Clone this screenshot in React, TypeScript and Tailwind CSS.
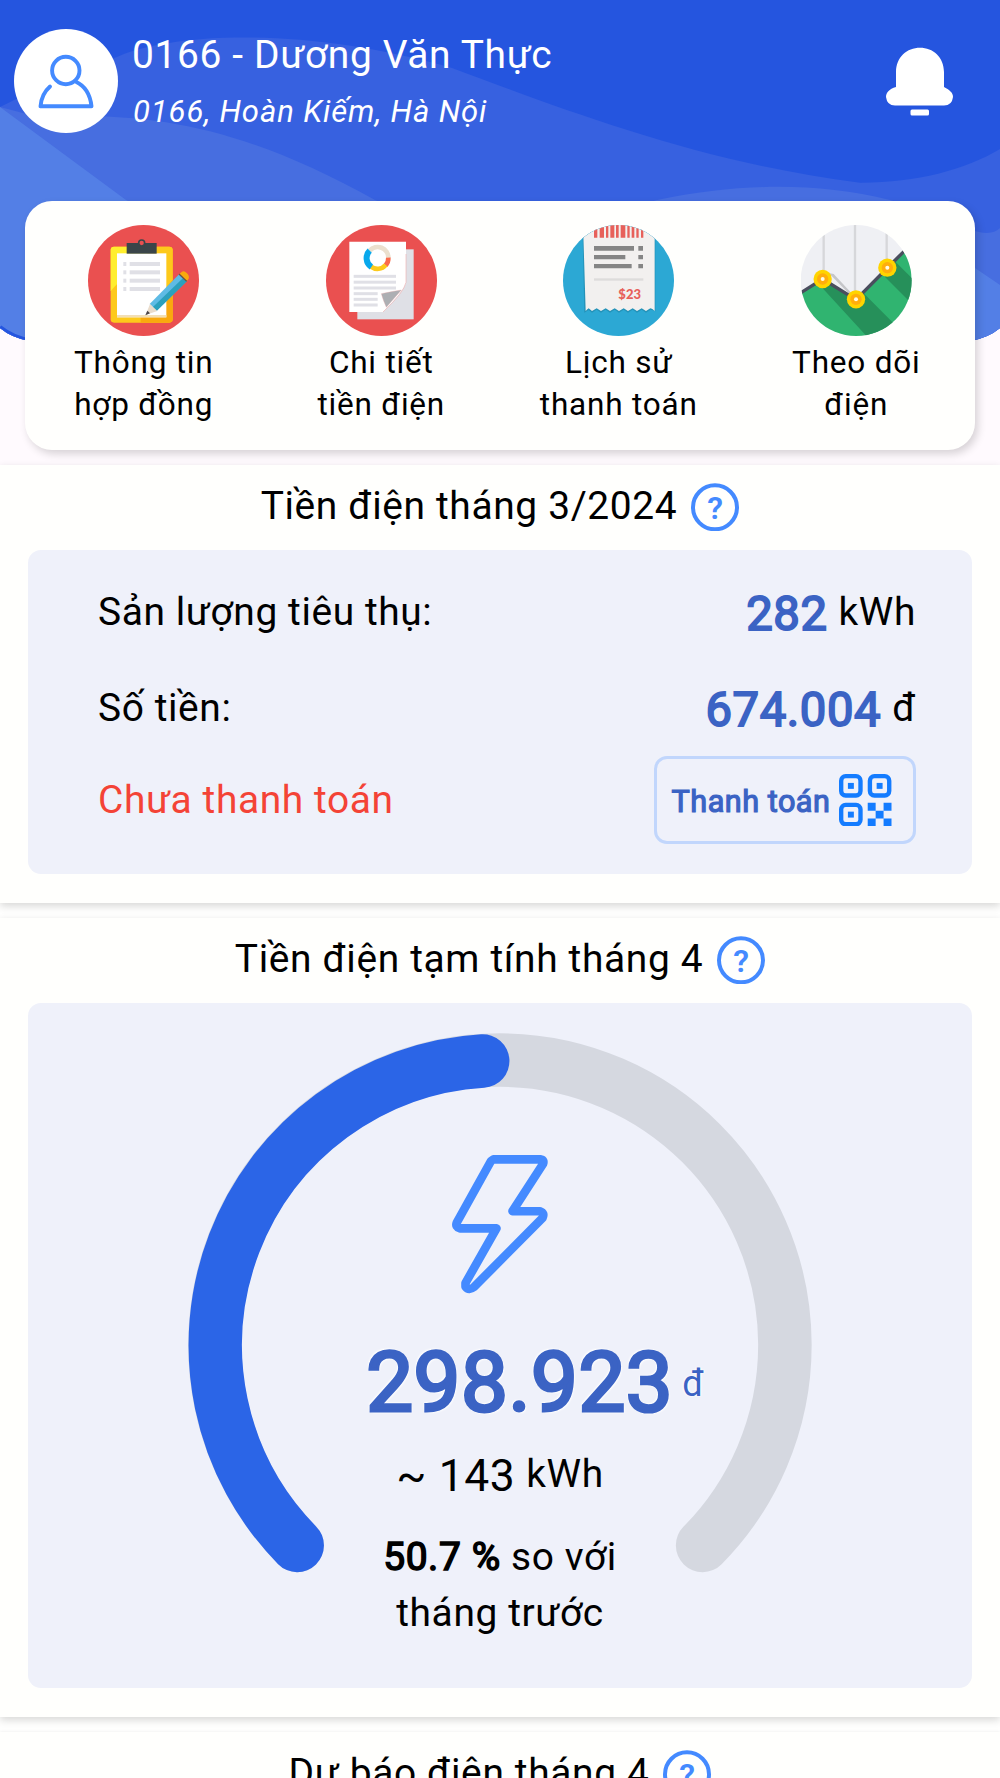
import React from 'react';

// 标题旁的问号
function HelpIcon() {
  return (
    <svg className="h-12 w-12 shrink-0" viewBox="0 0 48 48">
      <circle cx="24" cy="24.3" r="22" fill="none" stroke="#448aff" strokeWidth="4" />
      <text x="24" y="35.5" textAnchor="middle" fontFamily="Roboto, sans-serif" fontWeight="600" fontSize="32" fill="#448aff">?</text>
    </svg>
  );
}

function ContractIcon() {
  return (
    <svg className="h-[111px] w-[111px]" viewBox="84 43 333 333">
      <circle cx="250.500" cy="209.500" r="166.500" fill="#ea5050" />
      <rect x="152" y="108" width="186" height="228" rx="10" fill="#fdc91b" />
      <path d="M152 242V118q0-10 10-10h100v60q-70 20-110 74z" fill="#ffee2e" />
      <path d="M242 336v-18l96-110v118q0 10-10 10z" fill="#f9a90e" />
      <path d="M290 108h38q10 0 10 10v90h-48z" fill="#fdc91b" />
      <rect x="171" y="128" width="148" height="192" fill="#fff" />
      <rect x="171" y="313" width="148" height="7" fill="#f3dfb5" />
      <rect x="200" y="97" width="90" height="32" fill="#3a4549" />
      <circle cx="245" cy="97" r="9" fill="#ea5050" stroke="#3a4549" strokeWidth="5" />
      {[160, 185, 210, 235].map((y) => (
        <g key={y} fill="#e0e0e6">
          <rect x="190" y={y - 6} width="9" height="12" />
          <rect x="209" y={y - 6} width="91" height="12" />
        </g>
      ))}
      <path d="M358 190l22 21-91 90-20-21z" fill="#5ebbe5" />
      <path d="M370 201l11 11-91 89-12-11z" fill="#2ba0bd" />
      <path d="M270 280l-13 33 35-12z" fill="#eadccb" />
      <path d="M262 300l-6 14 14-6z" fill="#4a4347" />
      <path d="M357 191l8-7q7-5 15 3 9 8 6 17l-6 8z" fill="#f9a90e" />
      <path d="M357 190l23 22" stroke="#6b5047" strokeWidth="4" />
    </svg>
  );
}

function BillIcon() {
  return (
    <svg className="h-[111px] w-[111px]" viewBox="77 43 333 333">
      <circle cx="243.500" cy="209.500" r="166.500" fill="#ea5050" />
      <rect x="171" y="116" width="169" height="210" fill="#dfe0e6" />
      <path d="M147 93h170v122q-4 24-69 89H147z" fill="#fff" />
      <path d="M317 130v85q-6 30-69 89" fill="none" stroke="#efb4b4" strokeWidth="2" />
      <path d="M243 249q35-7 60-11l-45 52q-9-20-15-41z" fill="#adafb3" stroke="#e9a5a5" strokeWidth="1" />
      <g fill="none" strokeWidth="14">
        <path d="M208 120A32 32 0 0 1 264 142" stroke="#ebe0ce" />
        <path d="M264 141A32 32 0 0 1 256 164" stroke="#fb6a4c" />
        <path d="M256 163A32 32 0 0 1 212 168" stroke="#fcca1c" />
        <path d="M213 169A32 32 0 0 1 208 120" stroke="#08a8ec" strokeWidth="18" />
      </g>
      {[197, 214.500, 232].map((y) => (
        <rect key={y} x="160" y={y - 4.500} width="127" height="9" fill="#e0e0e6" />
      ))}
      {[249, 266, 283].map((y) => (
        <rect key={y} x="160" y={y - 4.500} width="72" height="9" fill="#e0e0e6" />
      ))}
    </svg>
  );
}

function HistoryIcon() {
  return (
    <svg className="h-[111px] w-[111px]" viewBox="99 43 333 333">
      <defs>
        <clipPath id="historyClip">
          <circle cx="265.500" cy="209.500" r="166.500" />
        </clipPath>
      </defs>
      <g clipPath="url(#historyClip)">
        <rect x="99" y="43" width="333" height="333" fill="#2ca8d4" />
        <path d="M157 40h219v262q-7-5-15-5l-13 9-13-9-14 9-13-9-14 9-13-9-14 9-13-9-14 9-13-9-14 9-13-9-14 9-10-8q-5 4-13 8z" fill="#2492b8" />
        <path d="M159 40h215v261q-7-8-13-8l-13 8-13-8-14 8-13-8-14 8-13-8-14 8-13-8-14 8-13-8-14 8-13-8-14 8-10-8q-5 4-9 8z" fill="#f2f0ef" />
        <path d="M192 43h10v38h-10zM209 43h13v38h-13zM228 43h7v38h-7zM241 43h12v38h-12zM258 43h8v38h-8zM272 43h14v38h-14zM292 43h7v38h-7zM305 43h8v38h-8zM319 43h7v38h-7zM333 43h7v38h-7z" fill="#e7605a" />
        <path d="M192 106h120v14H192zM325 106h14v14h-14zM192 133h94v13h-94zM325 133h14v13h-14zM192 160h113v13H192zM325 160h14v13h-14z" fill="#858585" />
        <rect x="192" y="203" width="148" height="7" fill="#dddcdb" />
        <text x="265" y="266" fontFamily="Lato, sans-serif" fontWeight="900" fontSize="39" textLength="68" fill="#e7605a">$23</text>
      </g>
    </svg>
  );
}

function TrackIcon() {
  return (
    <svg className="h-[111px] w-[111px]" viewBox="93 43 333 333">
      <defs>
        <clipPath id="trackClip">
          <circle cx="258.500" cy="209.500" r="166.500" />
        </clipPath>
      </defs>
      <g clipPath="url(#trackClip)">
        <rect x="92" y="43" width="333" height="333" fill="#eff0f4" />
        <path d="M161 43v150M255 43v210M350 43v120" stroke="#d6d7da" strokeWidth="7" />
        <path d="M176 187l15 3 58 62-14-5z" fill="#c5c6c9" />
        <path d="M92 247l66-42 100 62 94-95 73-72v276H92z" fill="#30b470" />
        <path d="M158 205l100 62 20-22 100 100-75 46-165-180z" fill="#26905a" />
        <path d="M352 172l25-18 60 60v77l-92-92z" fill="#26905a" />
        <path d="M88 249l70-44 100 62 94-95 50-50" fill="none" stroke="#4a4e5e" strokeWidth="10" />
        {[[158, 205], [258, 266], [352, 171]].map(([x, y]) => (
          <g key={x}>
            <circle cx={x} cy={y} r="27.500" fill="#ffd400" />
            <circle cx={x} cy={y} r="17" fill="#ffae0c" />
            <circle cx={x} cy={y} r="6" fill="#fffbe8" />
          </g>
        ))}
      </g>
    </svg>
  );
}

function QrIcon() {
  return (
    <svg className="h-[52.5px] w-[52.5px]" viewBox="0 0 53 53" fill="#147cff">
      {[[0, 0], [29, 0], [0, 29]].map(([x, y]) => (
        <g key={`${x}-${y}`}>
          <rect x={x + 2.200} y={y + 2.200} width="19.500" height="19.500" rx="4.500" fill="none" stroke="#147cff" strokeWidth="4.400" />
          <rect x={x + 9} y={y + 9} width="6" height="6" />
        </g>
      ))}
      <path d="M29 29h8v8h-8zM45 29h8v8h-8zM37 37h8v8h-8zM29 45h8v8h-8zM45 45h8v8h-8z" />
    </svg>
  );
}

const menus = [
  { icon: <ContractIcon />, lines: ['Thông tin', 'hợp đồng'] },
  { icon: <BillIcon />, lines: ['Chi tiết', 'tiền điện'] },
  { icon: <HistoryIcon />, lines: ['Lịch sử', 'thanh toán'] },
  { icon: <TrackIcon />, lines: ['Theo dõi', 'điện'] },
];

function SectionTitle({ text }: { text: string }) {
  return (
    <div className="flex h-[84px] items-center justify-center gap-[14px]">
      <h2 className="-mt-[2px] text-[38.9px] leading-[46px] tracking-[0.65px]">{text}</h2>
      <HelpIcon />
    </div>
  );
}

function App() {
  return (
    <div className="h-[1778px] w-[1000px] overflow-hidden bg-[#fffffe] font-['Roboto',sans-serif] text-black">
      <div className="relative h-[465px] bg-[#fffafe]">
        <svg className="absolute top-0 left-0 h-[342px] w-[1000px]" viewBox="0 0 1000 342">
          <defs>
            <clipPath id="headerClip">
              <path d="M0 0H1000V328Q988 338 970 341H30Q12 338 0 328z" />
            </clipPath>
          </defs>
          <g clipPath="url(#headerClip)">
            <rect width="1000" height="342" fill="#2555df" />
            <path d="M0 107C50 82 90 68 124 54C190 30 320 30 452 68C560 108 700 163 860 182.700C915 183 965 170 1000 149V342H0z" fill="#3761e0" />
            <path d="M0 107L38 117C150 112 240 125 375 200C450 235 560 230 657 200C740 183 815 182 890 200C930 212 950 226 975 231Q992 236 1000 228V342H0z" fill="#476ee0" />
            <path d="M0 107Q65 155 126 200L340 310H800L975 268L1000 285V342H0z" fill="#537fe6" />
            <path d="M0 327Q14 338 30 340" fill="none" stroke="#2555df" strokeWidth="4" />
          </g>
        </svg>

        <header className="relative flex h-[201px] items-start pl-[13.5px]">
          <div className="mt-[28.5px] flex h-[104.5px] w-[104.5px] items-center justify-center rounded-full bg-white">
            <svg className="h-14 w-14" viewBox="0 0 56 56" fill="none" stroke="#448aff" strokeWidth="3.9" strokeLinecap="round" strokeLinejoin="round">
              <circle cx="27.800" cy="17.500" r="13.700" />
              <path d="M12 33.500Q3.500 41 2.500 53.300H53.500Q51.500 35 38 28.700" />
            </svg>
          </div>
          <div className="ml-[14px] pt-[32px] text-white">
            <h1 className="text-[38.9px] leading-[46px] tracking-[0.65px]">0166 - Dương Văn Thực</h1>
            <p className="mt-[16px] ml-px text-[31px] leading-[36px] tracking-[0.9px] italic">0166, Hoàn Kiếm, Hà Nội</p>
          </div>
          <svg className="mt-[46.5px] mr-[47px] ml-auto h-[70px] w-[67px]" viewBox="0 0 67 70" fill="#fff">
            <path d="M10 40V25C10 10 21 .7 34 .7S58 10 58 25V40C64 43 67 46 67 50Q66 58.500 58 58.500H9Q1 58.500 0 50C0 46 3 42 10 40z" />
            <rect x="24.500" y="62.500" width="18.500" height="6" rx="1.500" />
          </svg>
        </header>

        <div className="relative mx-[25px] grid h-[249px] grid-cols-4 rounded-[27px] bg-[#fffffd] pt-[24px] shadow-[3px_4px_9px_rgba(0,0,0,0.16)]">
          {menus.map((menu) => (
            <div key={menu.lines[0]} className="flex flex-col items-center">
              {menu.icon}
              <div className="mt-[6px] text-center text-[31.5px] leading-[42px] tracking-[0.8px]">
                {menu.lines.map((line) => (
                  <div key={line}>{line}</div>
                ))}
              </div>
            </div>
          ))}
        </div>
      </div>

      <section className="relative h-[438px] bg-[#fffffd] px-[28px] pb-px shadow-[0_3px_8px_rgba(0,0,0,0.16)]">
        <SectionTitle text="Tiền điện tháng 3/2024" />
        <div className="mt-px h-[324px] rounded-[13px] bg-[#eff1fa] pt-[35px] pr-[56px] pl-[70px] text-[38.9px] leading-[54px] tracking-[0.6px]">
          <div className="flex h-[96px] items-start justify-between">
            <span>Sản lượng tiêu thụ:</span>
            <div className="flex items-start gap-[11px]">
              <span className="pt-[2px] text-[47.2px] text-[#3b63c4] [-webkit-text-stroke:1.8px_#3b63c4]">282</span>
              <span>kWh</span>
            </div>
          </div>
          <div className="flex h-[75px] items-start justify-between">
            <span>Số tiền:</span>
            <div className="flex items-start gap-[11px]">
              <span className="pt-[2px] text-[47.2px] text-[#3b63c4] [-webkit-text-stroke:1.8px_#3b63c4]">674.004</span>
              <span>đ</span>
            </div>
          </div>
          <div className="flex h-[88px] items-center justify-between">
            <span className="text-[#f44336]">Chưa thanh toán</span>
            <button className="flex h-[88px] w-[262px] items-center gap-[8px] rounded-[13px] border-3 border-[#c1d6fc] pl-[14px]">
              <span className="w-[160px] pt-[3px] text-[30.6px] tracking-[0.5px] whitespace-nowrap text-[#3b63c4] [-webkit-text-stroke:1.2px_#3b63c4]">Thanh toán</span>
              <QrIcon />
            </button>
          </div>
        </div>
      </section>

      <section className="relative mt-[15px] h-[799px] bg-[#fffffd] px-[28px] shadow-[0_3px_8px_rgba(0,0,0,0.16)]">
        <SectionTitle text="Tiền điện tạm tính tháng 4" />
        <div className="relative mt-px h-[685px] rounded-[13px] bg-[#eff1fa]">
          <svg className="absolute top-0 left-0 h-[685px] w-[944px]" viewBox="28 1003 944 685" fill="none" strokeLinecap="round" strokeLinejoin="round">
            <path d="M297.200 1545.400A285 285 0 1 1 702.600 1545.400" stroke="#d5d8e0" strokeWidth="53.500" />
            <path d="M297.200 1545.400A285 285 0 0 1 482.700 1061" stroke="#2b65e7" strokeWidth="53.500" />
            <path d="M493.500 1159.400H541Q544.500 1160 543 1164L512.500 1211.200H540Q545 1213 542.500 1218L474 1287Q469 1291 465.500 1286.500L465.500 1283L496.500 1228.400H460Q455 1227 456.800 1222.500L491 1161z" stroke="#448aff" strokeWidth="8.600" />
          </svg>
          <div className="relative flex flex-col items-center pt-[330px]">
            <div className="flex items-start pl-[70px] text-[#3b63c4]">
              <span className="text-[83.3px] leading-[99px] tracking-[0.6px] [-webkit-text-stroke:3.2px_#3b63c4] [text-shadow:2px_0_1px_#fff,-2px_0_1px_#fff,0_2px_1px_#fff,0_-2px_1px_#fff,2px_2px_2px_#fff,-2px_-2px_2px_#fff]">298.923</span>
              <span className="pt-[28px] pl-[9px] text-[36.1px] leading-[46px] [text-shadow:1px_0_2px_#fff,-1px_0_2px_#fff]">đ</span>
            </div>
            <div className="mt-[15px] flex items-start gap-[11px] tracking-[0.6px]">
              <span className="pt-[2px] text-[44.4px] leading-[54px]">~ 143</span>
              <span className="text-[38.9px] leading-[54px]">kWh</span>
            </div>
            <div className="mt-[26px] text-center text-[38.9px] leading-[56px] tracking-[0.6px]">
              <div><span className="[-webkit-text-stroke:1.5px_#000]">50.7 %</span> so với</div>
              <div>tháng trước</div>
            </div>
          </div>
        </div>
      </section>

      <section className="relative mt-[15px] h-[46px] overflow-hidden bg-[#fffffd] shadow-[0_0_3px_rgba(0,0,0,0.08)]">
        <SectionTitle text="Dự báo điện tháng 4" />
      </section>
    </div>
  );
}

export default React.memo(App);
